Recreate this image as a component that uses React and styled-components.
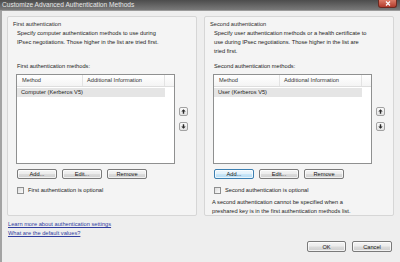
import React from "react";
import styled, { createGlobalStyle, css } from "styled-components";

const GlobalStyle = createGlobalStyle`
  html, body { margin: 0; padding: 0; background: #eeeeee; }
  body { font-family: "Liberation Sans", Arial, sans-serif; }
  * { box-sizing: border-box; }
`;

const Window = styled.div`
  width: 400px;
  height: 262px;
  display: flex;
  flex-direction: column;
  overflow: hidden;
  background: #eeeeee;
  font-size: 5.7px;
  color: #1c1c1c;
`;

const TitleBar = styled.div`
  height: 11px;
  flex-shrink: 0;
  display: flex;
  justify-content: space-between;
  align-items: flex-start;
  padding: 0 3px 0 2px;
  background: linear-gradient(#4c4c4c, #7a7a7a);
  border-bottom: 1px solid #9a9a9a;
`;

const Title = styled.span`
  font-size: 6.6px;
  line-height: 10px;
  color: #e6e6e6;
  white-space: nowrap;
`;

const CloseButton = styled.div`
  width: 19px;
  height: 8px;
  display: flex;
  align-items: center;
  justify-content: center;
  background: linear-gradient(#dc7b67, #b23b2c);
  border: 1px solid #6d2a21;
  border-top: none;
  border-radius: 0 0 3px 3px;
`;

const Body = styled.div`
  flex: 1;
  display: flex;
  flex-direction: column;
  border-left: 2px solid #a3a3a3;
  padding: 5px 6px 0 5px;
`;

const Panels = styled.div`
  display: flex;
  gap: 7px;
`;

const Group = styled.div`
  width: 190px;
  height: 200px;
  display: flex;
  flex-direction: column;
  padding: 3px 0 0 5px;
  background: #f4f4f4;
  border: 1px solid #d6d6d6;
  border-radius: 2px;
`;

const GroupTitle = styled.div`
  line-height: 8px;
  color: #2b2b2b;
  white-space: nowrap;
`;

const Desc = styled.div`
  margin: 1px 0 0 4px;
  height: 27px;
  line-height: 9px;
  white-space: nowrap;
`;

const ListLabel = styled.div`
  margin: 6px 0 0 4px;
  line-height: 9px;
  white-space: nowrap;
`;

const ListRow = styled.div`
  display: flex;
  margin: 3px 0 0 3px;
`;

const ListBox = styled.div`
  width: 159px;
  height: 90px;
  background: #ffffff;
  border: 1px solid #8f9090;
`;

const Header = styled.div`
  display: flex;
  height: 12px;
  background: linear-gradient(#ffffff, #f4f4f4);
  border-bottom: 1px solid #dedede;
`;

const HeaderCell = styled.div`
  width: ${(p) => p.$w}px;
  padding-left: ${(p) => p.$pad}px;
  line-height: 11px;
  border-right: 1px solid #e3e3e3;
  color: #333333;
  white-space: nowrap;
`;

const Item = styled.div`
  width: 148px;
  margin-top: 1px;
  padding-left: 4px;
  line-height: 9px;
  background: #e5e5e5;
  white-space: nowrap;
`;

const ArrowColumn = styled.div`
  display: flex;
  flex-direction: column;
  gap: 6px;
  margin-left: 4px;
  padding-top: 33px;
`;

const ArrowButton = styled.div`
  width: 9px;
  height: 9px;
  display: flex;
  align-items: center;
  justify-content: center;
  border: 1px solid #a2a2a2;
  border-radius: 2px;
  background: linear-gradient(#fafafa, #e2e2e2);
`;

const ButtonRow = styled.div`
  display: flex;
  gap: 5px;
  margin: 5px 0 0 4px;
`;

const Button = styled.div`
  width: ${(p) => p.$w || 40}px;
  height: ${(p) => p.$h || 10}px;
  display: flex;
  align-items: center;
  justify-content: center;
  border: 1px solid #7a7a7a;
  border-radius: 2px;
  background: linear-gradient(#f4f4f4 0%, #ececec 48%, #dcdcdc 52%, #cfcfcf 100%);
  box-shadow: inset 0 0 0 1px rgba(255, 255, 255, 0.7);
  color: #151515;
  white-space: nowrap;
  ${(p) =>
    p.$focused &&
    css`
      border-color: #3c7fb1;
      background: linear-gradient(#eef7fd 0%, #e2f1fb 48%, #c9e6f8 52%, #b6dcf3 100%);
    `}
`;

const CheckRow = styled.div`
  display: flex;
  align-items: center;
  gap: 4px;
  margin: 7px 0 0 4px;
  line-height: 9px;
  white-space: nowrap;
`;

const CheckBox = styled.div`
  width: 7px;
  height: 7px;
  border: 1px solid #8e8f8f;
  background: linear-gradient(135deg, #dcdcdc, #fbfbfb);
`;

const Note = styled.div`
  margin: 3px 0 0 2px;
  line-height: 9px;
  white-space: nowrap;
`;

const Footer = styled.div`
  display: flex;
  justify-content: space-between;
  align-items: flex-start;
  margin-top: 4px;
`;

const Links = styled.div`
  display: flex;
  flex-direction: column;
  margin-left: 1px;
`;

const Link = styled.a`
  line-height: 9px;
  color: #2f3c9e;
  text-decoration: underline;
  white-space: nowrap;
`;

const DialogButtons = styled.div`
  display: flex;
  gap: 6px;
  margin: 21px 2px 0 0;
`;

const Arrow = ({ down }) => (
  <svg width="5" height="5" viewBox="0 0 5 5" style={down ? { transform: "rotate(180deg)" } : undefined}>
    <path d="M2.5 0.3 L4.7 2.6 H3.2 V4.7 H1.8 V2.6 H0.3 Z" fill="#2a2a2a" />
  </svg>
);

const AuthGroup = ({ title, desc, listLabel, item, focusedAdd, checkLabel, note }) => (
  <Group>
    <GroupTitle>{title}</GroupTitle>
    <Desc>
      {desc.map((l, i) => (
        <div key={i}>{l}</div>
      ))}
    </Desc>
    <ListLabel>{listLabel}</ListLabel>
    <ListRow>
      <ListBox>
        <Header>
          <HeaderCell $w={66} $pad={5}>Method</HeaderCell>
          <HeaderCell $w={82} $pad={4}>Additional Information</HeaderCell>
        </Header>
        <Item>{item}</Item>
      </ListBox>
      <ArrowColumn>
        <ArrowButton><Arrow /></ArrowButton>
        <ArrowButton><Arrow down /></ArrowButton>
      </ArrowColumn>
    </ListRow>
    <ButtonRow>
      <Button $focused={focusedAdd}>Add...</Button>
      <Button>Edit...</Button>
      <Button>Remove</Button>
    </ButtonRow>
    <CheckRow>
      <CheckBox />
      <span>{checkLabel}</span>
    </CheckRow>
    {note && (
      <Note>
        {note.map((l, i) => (
          <div key={i}>{l}</div>
        ))}
      </Note>
    )}
  </Group>
);

export default function App() {
  return (
    <>
      <GlobalStyle />
      <Window>
        <TitleBar>
          <Title>Customize Advanced Authentication Methods</Title>
          <CloseButton>
            <svg width="6" height="5" viewBox="0 0 6 5">
              <path d="M1 0.5 L5 4.5 M5 0.5 L1 4.5" stroke="#ffffff" strokeWidth="1.2" />
            </svg>
          </CloseButton>
        </TitleBar>
        <Body>
          <Panels>
            <AuthGroup
              title="First authentication"
              desc={[
                "Specify computer authentication methods to use during",
                "IPsec negotiations.  Those higher in the list are tried first.",
              ]}
              listLabel="First authentication methods:"
              item="Computer (Kerberos V5)"
              checkLabel="First authentication is optional"
            />
            <AuthGroup
              title="Second authentication"
              desc={[
                "Specify user authentication methods or a health certificate to",
                "use during IPsec negotiations.  Those higher in the list are",
                "tried first.",
              ]}
              listLabel="Second authentication methods:"
              item="User (Kerberos V5)"
              focusedAdd
              checkLabel="Second authentication is optional"
              note={[
                "A second authentication cannot be specified when a",
                "preshared key is in the first authentication methods list.",
              ]}
            />
          </Panels>
          <Footer>
            <Links>
              <Link href="#">Learn more about authentication settings</Link>
              <Link href="#">What are the default values?</Link>
            </Links>
            <DialogButtons>
              <Button $w={39} $h={11}>OK</Button>
              <Button $w={40} $h={11}>Cancel</Button>
            </DialogButtons>
          </Footer>
        </Body>
      </Window>
    </>
  );
}
